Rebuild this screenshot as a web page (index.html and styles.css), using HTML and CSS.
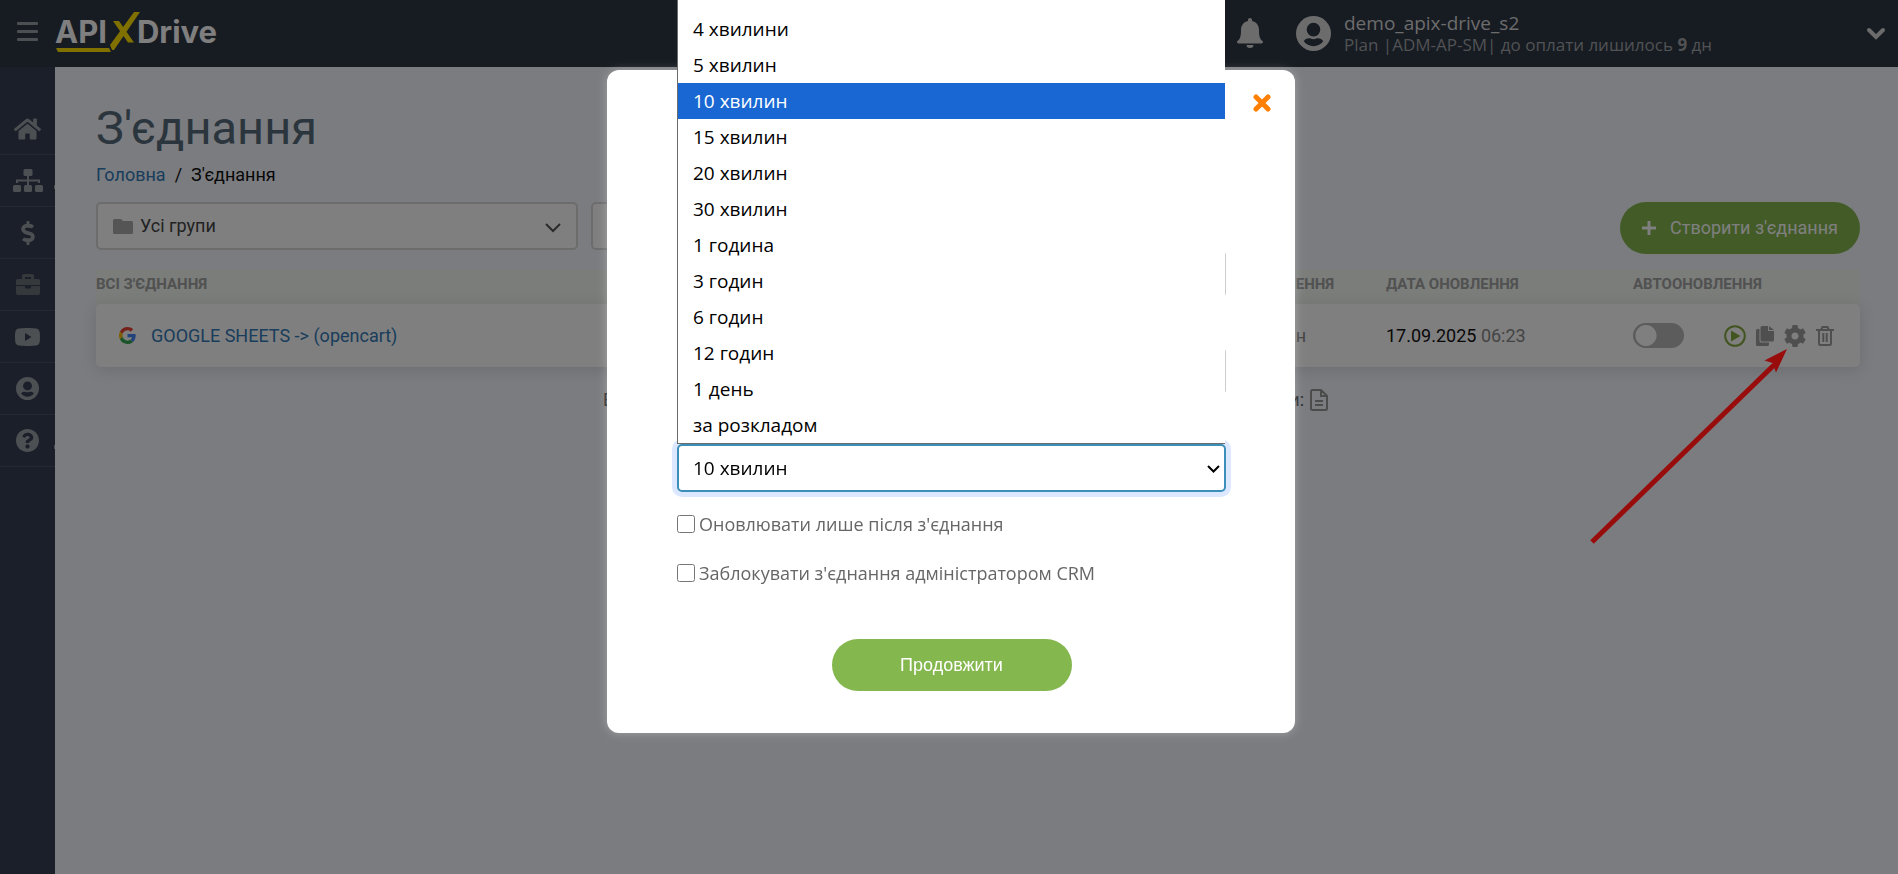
FILE: index.html
```html
<!DOCTYPE html>
<html lang="uk">
<head>
<meta charset="utf-8">
<title>З'єднання</title>
<link rel="stylesheet" href="styles.css">
</head>
<body>
<svg class="defs" aria-hidden="true">
  <symbol id="user" viewBox="0 0 36 36">
    <path fill-rule="evenodd" d="M18 0a18 18 0 1 1 0 36a18 18 0 0 1 0-36zM18 7a7 7 0 1 0 0 14a7 7 0 0 0 0-14zM8 26c2 3 6 5 10 5s8-2 10-5c-1-2-3-3-5.500-3c-1.500 0-2.500.8-4.500.8s-3-.8-4.500-.8c-2.500 0-4.500 1-5.500 3z"/>
  </symbol>
</svg>

<header class="topbar">
  <button class="burger" aria-label="Меню"><span></span><span></span><span></span></button>
  <a class="logo" href="#">
    <span>API</span>
    <svg class="logo-x" viewBox="0 0 30 40"><path d="M24 0h6L4 38H2l-2-5zM3 9h6l15 21.500h-6z"/></svg>
    <span>Drive</span>
    <svg class="logo-line" viewBox="0 0 56 5" preserveAspectRatio="none"><path d="M0 0h54l2 5H2z"/></svg>
  </a>
  <button class="bell" aria-label="Сповіщення"><svg viewBox="0 0 26 30"><path d="M13 0c1.200 0 2 .8 2 2v1c5 1 7 5 7 9c0 7 1 9 3.500 11c1 1 .3 2.500-1 2.500h-23c-1.300 0-2-1.500-1-2.500C3 21 4 19 4 12c0-4 2-8 7-9V2c0-1.200.8-2 2-2zM9.500 27h7a3.500 3 0 0 1-7 0z"/></svg></button>
  <div class="account">
    <svg class="avatar"><use href="#user"/></svg>
    <div>
      <div class="account-name">demo_apix-drive_s2</div>
      <div class="account-plan">Plan |ADM-AP-SM| до оплати лишилось <b>9</b> дн</div>
    </div>
    <button class="account-toggle" aria-label="Профіль"><svg viewBox="0 0 20 13"><path d="M3 3l7 7l7-7"/></svg></button>
  </div>
</header>

<div class="shell">
  <nav class="sidebar">
    <a href="#" aria-label="Головна"><svg width="27" height="24" viewBox="0 0 576 512"><path d="M280.370 148.260L96 300.110V464a16 16 0 0 0 16 16l112.060-.29a16 16 0 0 0 15.920-16V368a16 16 0 0 1 16-16h64a16 16 0 0 1 16 16v95.640a16 16 0 0 0 16 16.050L464 480a16 16 0 0 0 16-16V300L295.670 148.260a12.190 12.190 0 0 0-15.300 0zM571.600 251.470L488 182.560V44.050a12 12 0 0 0-12-12h-56a12 12 0 0 0-12 12v72.610L318.470 43a48 48 0 0 0-61 0L4.340 251.470a12 12 0 0 0-1.600 16.900l25.500 31A12 12 0 0 0 45.150 301l235.220-193.740a12.190 12.190 0 0 1 15.300 0L530.900 301a12 12 0 0 0 16.900-1.600l25.500-31a12 12 0 0 0-1.700-16.930z"/></svg></a>
    <a href="#" class="has-sub" aria-label="З'єднання"><svg width="30" height="24" viewBox="0 0 30 24"><rect x="10.500" y="0" width="9" height="7" rx="1.500"/><rect x="0" y="16" width="8" height="7" rx="1.500"/><rect x="11" y="16" width="8" height="7" rx="1.500"/><rect x="22" y="16" width="8" height="7" rx="1.500"/><path d="M14 7h2v9h-2zM3 10.500h24V14h-2v-1.500H5V14H3z"/></svg></a>
    <a href="#" aria-label="Оплата"><svg width="14" height="24" viewBox="0 0 288 512"><path d="M209.200 233.400l-108-31.600C88.700 198.200 80 186.500 80 173.500c0-16.300 13.200-29.500 29.500-29.500h66.300c12.200 0 24.200 3.700 34.200 10.500 6.100 4.100 14.300 3.100 19.500-2l34.800-34c7.100-6.900 6.100-18.400-1.800-24.500C238 74.800 207.400 64.100 176 64V16c0-8.800-7.200-16-16-16h-32c-8.800 0-16 7.200-16 16v48h-2.500C45.800 64-5.400 118.700.5 183.600c4.200 46.100 39.400 83.600 83.800 96.600l102.500 30c12.500 3.700 21.200 15.300 21.200 28.300 0 16.300-13.200 29.500-29.500 29.500h-66.300C100 368 88 364.300 78 357.500c-6.100-4.100-14.300-3.100-19.500 2l-34.800 34c-7.100 6.900-6.100 18.400 1.800 24.500 24.500 19.200 55.100 29.900 86.500 30v48c0 8.800 7.200 16 16 16h32c8.800 0 16-7.200 16-16v-48.200c46.600-.9 90.300-28.600 105.700-72.700 21.500-61.600-14.600-124.800-72.500-141.700z"/></svg></a>
    <a href="#" class="dim" aria-label="Проєкти"><svg width="24" height="22" viewBox="0 0 24 22"><path fill-rule="evenodd" d="M8 0h8a2 2 0 0 1 2 2v3h4a2 2 0 0 1 2 2v4H0V7a2 2 0 0 1 2-2h4V2a2 2 0 0 1 2-2zM9 3v2h6V3zM0 12h9v1.500a1 1 0 0 0 1 1h4a1 1 0 0 0 1-1V12h9v7a2 2 0 0 1-2 2H2a2 2 0 0 1-2-2z"/></svg></a>
    <a href="#" aria-label="Відео"><svg width="25" height="18" viewBox="0 0 25 18"><path fill-rule="evenodd" d="M4 .5C9-.2 16-.2 21 .5c3 .4 4 2 4 8.500s-1 8.100-4 8.500c-5 .7-12 .7-17 0C1 17.100 0 15.500 0 9S1 .9 4 .5zM10 5v8l6.500-4z"/></svg></a>
    <a href="#" aria-label="Профіль"><svg width="23" height="23"><use href="#user"/></svg></a>
    <a href="#" class="has-sub" aria-label="Допомога"><svg width="23" height="23" viewBox="8 8 496 496"><path fill-rule="evenodd" d="M504 256c0 136.997-111.043 248-248 248S8 392.997 8 256C8 119.083 119.043 8 256 8s248 111.083 248 248zM262.655 90c-54.497 0-89.255 22.957-116.549 63.758-3.536 5.286-2.353 12.415 2.715 16.258l34.699 26.310c5.205 3.947 12.621 3.008 16.665-2.122 17.864-22.658 30.113-35.797 57.303-35.797 20.429 0 45.698 13.148 45.698 32.958 0 14.976-12.363 22.667-32.534 33.976C247.128 238.528 216 254.941 216 296v4c0 6.627 5.373 12 12 12h56c6.627 0 12-5.373 12-12v-1.333c0-28.462 83.186-29.647 83.186-106.667 0-58.002-60.165-102-116.531-102zM256 338c-25.365 0-46 20.635-46 46 0 25.364 20.635 46 46 46s46-20.636 46-46c0-25.365-20.635-46-46-46z"/></svg></a>
  </nav>

  <main class="content">
    <h1>З'єднання</h1>
    <nav class="crumbs"><a href="#">Головна</a><span>/</span><span>З'єднання</span></nav>

    <div class="toolbar">
      <div class="filter">
        <svg class="folder" viewBox="0 0 20 15"><path d="M1.500 0H8l2 2h8.500A1.500 1.500 0 0 1 20 3.500v10a1.500 1.500 0 0 1-1.500 1.500h-17A1.500 1.500 0 0 1 0 13.500v-12A1.500 1.500 0 0 1 1.500 0z"/></svg>
        <select aria-label="Група"><option>Усі групи</option></select>
        <svg class="chevron" viewBox="0 0 16 10"><path d="M1 1l7 7l7-7"/></svg>
      </div>
      <div class="filter"><input type="search" aria-label="Пошук"></div>
      <button class="btn create"><svg viewBox="0 0 14 14"><path d="M7 0v14M0 7h14"/></svg>Створити з'єднання</button>
    </div>

    <table class="links">
      <thead>
        <tr><th>ВСІ З'ЄДНАННЯ</th><th>ІНТЕРВАЛ ОНОВЛЕННЯ</th><th>ДАТА ОНОВЛЕННЯ</th><th>АВТООНОВЛЕННЯ</th></tr>
      </thead>
      <tbody>
        <tr>
          <td class="name">
            <svg viewBox="0 0 48 48"><path fill="#ea4335" d="M24 9.500c3.540 0 6.710 1.220 9.210 3.600l6.850-6.850C35.900 2.380 30.470 0 24 0 14.620 0 6.510 5.380 2.560 13.220l7.980 6.190C12.430 13.720 17.740 9.500 24 9.500z"/><path fill="#4285f4" d="M46.980 24.550c0-1.570-.15-3.090-.38-4.550H24v9.020h12.940c-.58 2.960-2.260 5.480-4.780 7.180l7.730 6c4.510-4.180 7.090-10.360 7.090-17.650z"/><path fill="#fbbc05" d="M10.530 28.590c-.48-1.450-.76-2.990-.76-4.590s.27-3.140.76-4.590l-7.980-6.190C.92 16.460 0 20.120 0 24c0 3.880.92 7.540 2.560 10.780l7.970-6.190z"/><path fill="#34a853" d="M24 48c6.480 0 11.930-2.130 15.890-5.810l-7.730-6c-2.150 1.450-4.920 2.300-8.160 2.300-6.260 0-11.570-4.220-13.470-9.910l-7.980 6.190C6.510 42.620 14.620 48 24 48z"/></svg>
            <a href="#">GOOGLE SHEETS -&gt; (opencart)</a>
          </td>
          <td class="muted">кожні 10 хвилин</td>
          <td>17.09.2025 <span class="muted">06:23</span></td>
          <td class="auto">
            <input class="switch" type="checkbox" aria-label="Автооновлення">
            <div class="actions">
              <button aria-label="Запустити"><svg width="22" height="22" viewBox="0 0 22 22"><circle cx="11" cy="11" r="9.800" fill="none" stroke="#85a83f" stroke-width="2"/><path fill="#85a83f" d="M7 5.500v11l9.500-5.500z"/></svg></button>
              <button aria-label="Копіювати"><svg width="18" height="20" viewBox="0 0 18 20"><path d="M6 0h6v5h6v9a1.500 1.500 0 0 1-1.500 1.500H6A1.500 1.500 0 0 1 4.500 14V1.500A1.500 1.500 0 0 1 6 0zM13 0l5 4h-5zM0 4.500A1.500 1.500 0 0 1 1.500 3h2v12A1.500 1.500 0 0 0 5 16.500h8v2a1.500 1.500 0 0 1-1.500 1.500h-10A1.500 1.500 0 0 1 0 18.500z"/></svg></button>
              <button aria-label="Налаштувати"><svg width="22" height="22" viewBox="8 8 496 496"><path fill-rule="evenodd" d="M487.400 315.700l-42.600-24.600c4.300-23.200 4.300-47 0-70.200l42.600-24.600c4.900-2.800 7.100-8.600 5.500-14-11.100-35.600-30-67.800-54.700-94.600-3.800-4.100-10-5.100-14.800-2.300L380.800 110c-17.900-15.400-38.500-27.300-60.800-35.100V25.800c0-5.600-3.900-10.500-9.400-11.700-36.700-8.200-74.300-7.800-109.200 0-5.500 1.200-9.400 6.100-9.400 11.700V75c-22.200 7.900-42.800 19.800-60.800 35.100L88.700 85.500c-4.900-2.800-11-1.900-14.800 2.300-24.700 26.700-43.600 58.900-54.700 94.600-1.700 5.400.6 11.200 5.500 14L67.300 221c-4.300 23.200-4.300 47 0 70.200l-42.600 24.600c-4.900 2.800-7.100 8.600-5.500 14 11.100 35.600 30 67.800 54.700 94.600 3.800 4.100 10 5.100 14.800 2.300l42.600-24.600c17.900 15.400 38.500 27.300 60.800 35.100v49.200c0 5.600 3.900 10.500 9.400 11.700 36.700 8.200 74.300 7.800 109.200 0 5.500-1.200 9.400-6.100 9.400-11.700v-49.200c22.200-7.900 42.800-19.800 60.800-35.100l42.600 24.600c4.900 2.800 11 1.900 14.800-2.300 24.700-26.700 43.600-58.900 54.700-94.600 1.500-5.500-.7-11.300-5.600-14.100zM256 336c-44.100 0-80-35.900-80-80s35.900-80 80-80 80 35.900 80 80-35.900 80-80 80z"/></svg></button>
              <button aria-label="Видалити"><svg width="18" height="20" viewBox="0 0 18 20"><path fill="none" stroke="#9f9f9f" stroke-width="2" d="M0 4h18M5 4l1.500-3h5L13 4M3 4v13.500A1.500 1.500 0 0 0 4.500 19h9a1.500 1.500 0 0 0 1.500-1.500V4M7.300 7v9M10.700 7v9"/></svg></button>
            </div>
          </td>
        </tr>
      </tbody>
    </table>

    <div class="summary">
      <span>Всього</span>
      <span class="log">Логи: <svg viewBox="0 0 18 22"><path d="M2.500 1H11l6 6v12.500a1.500 1.500 0 0 1-1.500 1.500h-13A1.500 1.500 0 0 1 1 19.500v-17A1.500 1.500 0 0 1 2.500 1zM11 1v6h6M5 12h8M5 16h8"/></svg></span>
    </div>
  </main>
</div>

<div class="overlay">
  <svg class="pointer" viewBox="0 0 200 200"><path d="M2 194L184 17" stroke="#990c0c" stroke-width="5"/><path fill="#990c0c" d="M197 1l-22.500 11.500l8 2.500l3.500 9.500z"/></svg>
  <form class="modal">
    <button class="close" type="button" aria-label="Закрити"><svg viewBox="0 0 18 18"><path d="M3 3l12 12M15 3L3 15"/></svg></button>
    <input class="field" type="text" aria-label="Назва">
    <input class="field" type="text" aria-label="Група">
    <div class="picker">
      <select class="field" aria-label="Інтервал оновлення"><option>10 хвилин</option></select>
      <svg class="picker-arrow" viewBox="0 0 13 9"><path d="M1 1l5.500 5.500L12 1"/></svg>
      <ul class="menu" role="listbox">
        <li role="option">4 хвилини</li>
        <li role="option">5 хвилин</li>
        <li role="option" class="active" aria-selected="true">10 хвилин</li>
        <li role="option">15 хвилин</li>
        <li role="option">20 хвилин</li>
        <li role="option">30 хвилин</li>
        <li role="option">1 година</li>
        <li role="option">3 годин</li>
        <li role="option">6 годин</li>
        <li role="option">12 годин</li>
        <li role="option">1 день</li>
        <li role="option">за розкладом</li>
      </ul>
    </div>
    <label class="check"><input type="checkbox">Оновлювати лише після з'єднання</label>
    <label class="check"><input type="checkbox">Заблокувати з'єднання адміністратором CRM</label>
    <button class="btn submit" type="button">Продовжити</button>
  </form>
</div>
</body>
</html>
```

FILE: styles.css
```css
* { box-sizing: border-box; }

body {
  margin: 0;
  min-height: 100vh;
  display: flex;
  flex-direction: column;
  overflow: hidden;
  background: #f6f8ff;
  font-family: Roboto, "Open Sans", sans-serif;
  font-size: 18px;
  line-height: 24px;
  color: #111;
}

button, input, select { font: inherit; }
button { padding: 0; border: 0; background: none; }
svg { display: block; flex: none; }
a { color: #337ab7; text-decoration: none; }
.defs { position: absolute; width: 0; height: 0; }

.topbar {
  height: 67px;
  display: flex;
  align-items: center;
  padding: 0 12px 0 17px;
  background: #2e3644;
  color: #fff;
  font-family: "Open Sans", "Noto Sans", sans-serif;
}
.burger { width: 21px; display: grid; gap: 5px; margin: 0 17px 4px 0; }
.burger span { height: 3px; border-radius: 1px; background: #98a0a5; }

.logo {
  position: relative;
  display: flex;
  align-items: center;
  height: 40px;
  margin: 0 auto 4px 0;
  color: #fff;
  font-family: Inter, sans-serif;
  font-weight: 700;
  font-size: 31px;
  line-height: 40px;
}
.logo-x { width: 30px; height: 40px; margin: 0 -3px 0 3px; fill: #ffe000; }
.logo-line { position: absolute; left: 1px; bottom: 0; width: 55px; height: 4px; fill: #ffe000; }

.bell { margin: 0 33px 2px 0; }
.bell svg { width: 26px; height: 30px; fill: #d8d8d8; }
.account { display: flex; align-items: center; width: 590px; }
.avatar { width: 35px; height: 35px; margin-right: 13px; fill: #d8d8d8; }
.account-name { font-size: 19px; line-height: 22px; color: #d8d8d8; }
.account-plan { font-size: 17px; line-height: 22px; color: #a0a4a8; }
.account-toggle { margin-left: auto; }
.account-toggle svg { width: 20px; height: 13px; fill: none; stroke: #d8d8d8; stroke-width: 4; stroke-linecap: round; }

.shell { flex: 1; display: flex; }
.sidebar { width: 55px; flex: none; padding-top: 36px; background: #363e52; }
.sidebar a {
  position: relative;
  height: 52px;
  display: flex;
  align-items: center;
  justify-content: center;
  border-bottom: 1px solid #4a5164;
  fill: #9aa0a5;
}
.sidebar .dim { fill: #6c7277; }
.sidebar .has-sub::after {
  content: "";
  position: absolute;
  right: 0;
  top: 30px;
  width: 1px;
  height: 4px;
  background: #9aa0a5;
}

.content { flex: 1; padding: 34px 38px 0 41px; }
h1 { margin: 0; font-weight: 400; font-size: 47px; line-height: 54px; color: #566a7a; }
.crumbs { display: flex; gap: 9px; margin-top: 8px; }

.toolbar { display: flex; gap: 13px; margin-top: 15px; }
.filter {
  width: 482px;
  height: 48px;
  display: flex;
  align-items: center;
  padding: 0 15px;
  border: 2px solid #d8d8da;
  border-radius: 5px;
  background: #fff;
}
.filter select, .filter input {
  flex: 1;
  min-width: 0;
  padding: 0;
  border: 0;
  outline: 0;
  appearance: none;
  background: none;
  color: #444;
}
.folder { width: 20px; height: 15px; margin-right: 7px; fill: #aaa; }
.chevron { width: 16px; height: 10px; margin-top: 4px; fill: none; stroke: #555; stroke-width: 2; }

.btn {
  height: 52px;
  border-radius: 26px;
  background: #85b74f;
  color: #fff;
}
.create { display: flex; align-items: center; gap: 14px; margin-left: auto; padding: 0 22px; }
.create svg { width: 14px; height: 14px; stroke: #fff; stroke-width: 3; }

.links { display: block; margin-top: 16px; }
.links thead, .links tbody { display: block; }
.links tr { display: grid; grid-template-columns: 1072fr 218fr 247fr 227fr; align-items: center; }
.links thead { background: #f5faf5; }
.links th {
  padding: 0 0 6px;
  text-align: left;
  font-weight: 700;
  font-size: 15px;
  line-height: 28px;
  color: #a2a2a2;
}
.links td { padding: 0; }
.links tbody tr { height: 63px; border-radius: 5px; background: #fff; box-shadow: 0 3px 16px rgba(0, 0, 0, .12); }
.links .name { display: flex; align-items: center; gap: 15px; padding-left: 23px; }
.name svg { width: 17px; height: 17px; }
.muted { color: #888; }
.auto { display: flex; align-items: center; justify-content: space-between; }
.links .auto { padding-right: 26px; }

.switch {
  width: 51px;
  height: 25px;
  margin: 0;
  appearance: none;
  border-radius: 13px;
  background: radial-gradient(circle at 13px 50%, #fff 10px, #b8b8b8 11px);
}
.actions { display: flex; align-items: center; gap: 10px; fill: #9f9f9f; }

.summary {
  width: 750px;
  display: flex;
  justify-content: space-between;
  margin: 21px auto 0;
  padding-right: 25px;
  color: #555;
}
.log { display: flex; align-items: center; gap: 6px; }
.log svg { width: 18px; height: 22px; fill: none; stroke: #999; stroke-width: 2; }

.overlay {
  position: fixed;
  inset: 0;
  display: flex;
  justify-content: center;
  align-items: flex-start;
  padding: 70px 0 0 4px;
  background: rgba(0, 0, 0, .5);
}
.pointer { position: absolute; left: 1590px; top: 348px; width: 200px; height: 200px; }

.modal {
  position: relative;
  width: 688px;
  display: flex;
  flex-direction: column;
  padding: 180px 69px 42px 70px;
  border-radius: 12px;
  background: #fff;
  box-shadow: 0 0 10px rgba(255, 255, 255, .3);
  font-family: "Open Sans", "Noto Sans", sans-serif;
  color: #666;
}
.close { position: absolute; top: 24px; right: 24px; }
.close svg { width: 18px; height: 18px; fill: none; stroke: #ff8000; stroke-width: 5; stroke-linecap: round; }

.field {
  width: 100%;
  height: 48px;
  margin-bottom: 49px;
  padding: 0 15px;
  border: 1px solid #ccc;
  border-radius: 5px;
  background: #fff;
}
.picker { position: relative; margin-bottom: 20px; }
.picker .field {
  display: block;
  margin: 0;
  padding: 0 14px;
  border: 2px solid #3b8fb8;
  box-shadow: 0 0 0 5px #dbe8ff;
  appearance: none;
  color: #000;
  font-size: 19px;
}
.picker-arrow { position: absolute; right: 6px; top: 21px; width: 13px; height: 9px; fill: none; stroke: #000; stroke-width: 2; }

.menu {
  position: absolute;
  left: 0;
  right: 1px;
  bottom: 48px;
  margin: 0;
  padding: 36px 0 0;
  list-style: none;
  border: 1px solid #6c6c6c;
  border-right: 0;
  background: #fff;
  color: #000;
  font-size: 19px;
  line-height: 36px;
}
.menu li { padding: 0 15px; }
.menu .active { background: #1967d2; color: #fff; }

.check { display: flex; align-items: center; gap: 4px; margin-bottom: 25px; font-size: 18px; line-height: 24px; }
.check input { width: 18px; height: 18px; margin: 0; }
.submit { width: 240px; margin: 29px auto 0; font-family: "Liberation Sans", Arial, sans-serif; }
```
